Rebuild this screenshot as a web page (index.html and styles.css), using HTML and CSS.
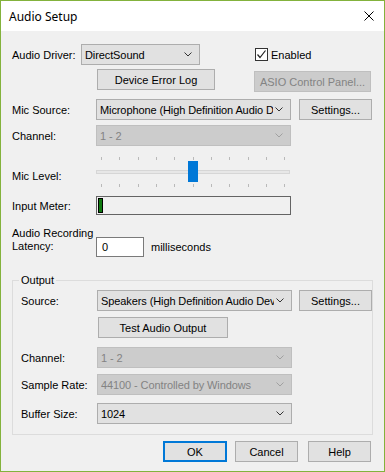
FILE: index.html
```html
<!DOCTYPE html>
<html lang="en">
<head>
  <meta charset="UTF-8">
  <title>Audio Setup</title>
  <link rel="stylesheet" href="styles.css">
</head>
<body>
  <div class="window">
    <div class="titlebar">
      <span class="title">Audio Setup</span>
      <svg class="close" width="10" height="10" viewBox="0 0 10 10">
        <path d="M0.5 0.5 L9.5 9.5 M9.5 0.5 L0.5 9.5" stroke="#000" stroke-width="1" fill="none"/>
      </svg>
    </div>

    <div class="content">
      <div class="row row-driver">
        <span class="label lbl-driver">Audio Driver:</span>
        <div class="combo w-driver"><span class="combo-text">DirectSound</span><svg class="chev" width="8" height="5" viewBox="0 0 8 5"><path d="M0.5 0.5 L4 4 L7.5 0.5" stroke="#333" fill="none"/></svg></div>
        <div class="check">
          <span class="box"><svg width="11" height="11" viewBox="0 0 11 11"><path d="M1.5 5.5 L4 8.5 L9.5 1.5" stroke="#222" stroke-width="1.2" fill="none"/></svg></span>
          <span>Enabled</span>
        </div>
      </div>

      <div class="row row-buttons">
        <button class="btn btn-errlog">Device Error Log</button>
        <button class="btn btn-asio" disabled>ASIO Control Panel...</button>
      </div>

      <div class="row row-mic">
        <span class="label lbl-col">Mic Source:</span>
        <div class="combo w-wide"><span class="combo-text">Microphone (High Definition Audio D</span><svg class="chev" width="8" height="5" viewBox="0 0 8 5"><path d="M0.5 0.5 L4 4 L7.5 0.5" stroke="#333" fill="none"/></svg></div>
        <button class="btn btn-settings">Settings...</button>
      </div>

      <div class="row row-channel">
        <span class="label lbl-col">Channel:</span>
        <div class="combo w-wide disabled"><span class="combo-text">1 - 2</span><svg class="chev" width="8" height="5" viewBox="0 0 8 5"><path d="M0.5 0.5 L4 4 L7.5 0.5" stroke="#a0a0a0" fill="none"/></svg></div>
      </div>

      <div class="row row-slider">
        <span class="label lbl-col lbl-level">Mic Level:</span>
        <svg class="slider" width="195" height="31" viewBox="0 0 195 31">
          <g id="ticks" fill="#b9b9b9"></g>
          <rect x="0.5" y="13.5" width="193" height="3" fill="#e7e7e7" stroke="#d6d6d6"/>
          <rect x="92" y="4" width="10" height="21" fill="#0078d7"/>
        </svg>
      </div>

      <div class="row row-meter">
        <span class="label lbl-col">Input Meter:</span>
        <div class="meter"><span class="meter-bar"></span></div>
      </div>

      <div class="row row-latency">
        <span class="label lbl-col lbl-two">Audio Recording<br>Latency:</span>
        <div class="latency">
          <div class="textbox">0</div>
          <span class="unit">milliseconds</span>
        </div>
      </div>

      <fieldset class="group">
        <legend>Output</legend>

        <div class="row row-source">
          <span class="label lbl-out">Source:</span>
          <div class="combo w-wide"><span class="combo-text">Speakers (High Definition Audio Dev</span><svg class="chev" width="8" height="5" viewBox="0 0 8 5"><path d="M0.5 0.5 L4 4 L7.5 0.5" stroke="#333" fill="none"/></svg></div>
          <button class="btn btn-settings">Settings...</button>
        </div>

        <div class="row row-test">
          <button class="btn btn-test">Test Audio Output</button>
        </div>

        <div class="row row-outchan">
          <span class="label lbl-out">Channel:</span>
          <div class="combo w-wide disabled"><span class="combo-text">1 - 2</span><svg class="chev" width="8" height="5" viewBox="0 0 8 5"><path d="M0.5 0.5 L4 4 L7.5 0.5" stroke="#a0a0a0" fill="none"/></svg></div>
        </div>

        <div class="row row-rate">
          <span class="label lbl-out">Sample Rate:</span>
          <div class="combo w-wide disabled"><span class="combo-text">44100 - Controlled by Windows</span><svg class="chev" width="8" height="5" viewBox="0 0 8 5"><path d="M0.5 0.5 L4 4 L7.5 0.5" stroke="#a0a0a0" fill="none"/></svg></div>
        </div>

        <div class="row row-buffer">
          <span class="label lbl-out">Buffer Size:</span>
          <div class="combo w-wide"><span class="combo-text">1024</span><svg class="chev" width="8" height="5" viewBox="0 0 8 5"><path d="M0.5 0.5 L4 4 L7.5 0.5" stroke="#333" fill="none"/></svg></div>
        </div>
      </fieldset>

      <div class="row row-dialog">
        <button class="btn btn-dlg btn-default">OK</button>
        <button class="btn btn-dlg btn-cancel">Cancel</button>
        <button class="btn btn-dlg btn-help">Help</button>
      </div>
    </div>
  </div>

  <script>
    // tick marks above and below the slider track
    const ticks = document.getElementById('ticks');
    for (let i = 0; i < 11; i++) {
      const x = Math.round(5 + i * 18.33);
      ticks.innerHTML += `<rect x="${x}" y="0" width="1" height="3"/><rect x="${x}" y="27" width="1" height="3"/>`;
    }
  </script>
</body>
</html>
```

FILE: styles.css
```css
* {
  box-sizing: border-box;
}
body {
  margin: 0;
  background-color: #fff;
}
.window {
  width: 385px;
  height: 472px;
  border: 1px solid #83b23c;
  background-color: #f0f0f0;
  font-family: 'Liberation Sans', Arial, sans-serif;
  font-size: 11px;
  color: #000;
}
.titlebar {
  height: 30px;
  background-color: #fff;
  display: flex;
  align-items: center;
  justify-content: space-between;
  padding: 0 10px 0 8px;
}
.title {
  font-family: 'Noto Sans', sans-serif;
  font-size: 12px;
}
.content {
  padding: 13px 11px 0 11px;
}
.row {
  display: flex;
  align-items: center;
}
.label {
  white-space: nowrap;
}
.lbl-driver {
  width: 69px;
}
.lbl-col {
  width: 84px;
}
.lbl-out {
  width: 76px;
}

/* combo boxes */
.combo {
  height: 21px;
  display: flex;
  align-items: center;
  background-color: #e1e1e1;
  border: 1px solid #adadad;
  padding: 0 7px 0 3px;
}
.combo-text {
  flex: 1;
  overflow: hidden;
  white-space: nowrap;
  letter-spacing: -0.1px;
}
.chev {
  margin-left: 2px;
  flex-shrink: 0;
}
.combo.disabled {
  background-color: #cccccc;
  border-color: #bfbfbf;
  color: #838383;
}
.w-driver {
  width: 119px;
}
.w-wide {
  width: 195px;
}

/* buttons */
.btn {
  font: inherit;
  height: 21px;
  background-color: #e1e1e1;
  border: 1px solid #adadad;
  color: #000;
  padding: 0;
  margin: 0;
  text-align: center;
}
.btn:disabled {
  background-color: #cccccc;
  border-color: #bfbfbf;
  color: #838383;
}

.check {
  display: flex;
  align-items: center;
  margin-left: 55px;
}
.box {
  width: 13px;
  height: 13px;
  border: 1px solid #333;
  background-color: #fff;
  display: flex;
  margin-right: 3px;
}

.row-driver {
  height: 21px;
}
.row-buttons {
  margin-top: 4px;
  height: 23px;
  align-items: flex-start;
}
.btn-errlog {
  width: 118px;
  margin-left: 85px;
}
.btn-asio {
  width: 117px;
  margin-left: 39px;
  margin-top: 2px;
}
.row-mic {
  margin-top: 7px;
}
.btn-settings {
  width: 73px;
  margin-left: 8px;
}
.row-channel {
  margin-top: 5px;
}
.row-slider {
  margin-top: 11px;
  align-items: flex-start;
}
.lbl-level {
  margin-top: 13px;
}
.slider {
  display: block;
}
.row-meter {
  margin-top: 8px;
}
.meter {
  width: 195px;
  height: 19px;
  border: 1px solid #646464;
  padding: 1px;
}
.meter-bar {
  display: block;
  width: 5px;
  height: 15px;
  background-color: #0f7a0f;
  border: 1px solid #000;
}
.row-latency {
  margin-top: 12px;
  align-items: flex-start;
}
.lbl-two {
  line-height: 13px;
}
.latency {
  display: flex;
  align-items: center;
  margin-top: 10px;
}
.textbox {
  width: 48px;
  height: 20px;
  background-color: #fff;
  border: 1px solid #7a7a7a;
  padding: 3px 0 0 5px;
}
.unit {
  margin-left: 7px;
}

/* output group */
.group {
  margin: 16px 0 0 0;
  border: 1px solid #dcdcdc;
  padding: 0 0 10px 8px;
}
.group legend {
  padding: 0 2px;
  margin-left: -2px;
  line-height: 15px;
}
.row-source {
  margin-top: 2px;
}
.row-source .btn-settings {
  margin-left: 7px;
}
.row-test {
  margin-top: 6px;
}
.btn-test {
  width: 130px;
  margin-left: 77px;
}
.row-outchan {
  margin-top: 9px;
}
.row-rate {
  margin-top: 6px;
}
.row-buffer {
  margin-top: 8px;
}

.row-dialog {
  margin-top: 6px;
  justify-content: flex-end;
  padding-right: 2px;
}
.btn-dlg {
  width: 64px;
}
.btn-default {
  border: 2px solid #0078d7;
}
.btn-cancel {
  margin-left: 8px;
  width: 63px;
}
.btn-help {
  margin-left: 10px;
  width: 63px;
}
```
